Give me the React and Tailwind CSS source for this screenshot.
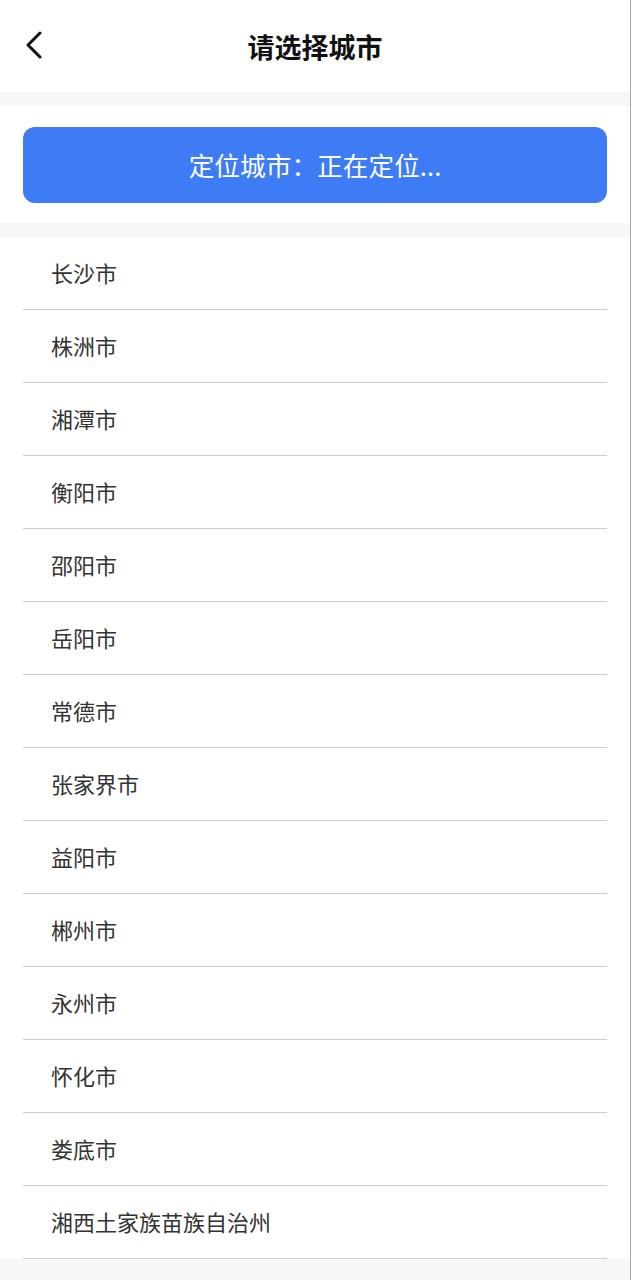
import React from "react";

const cities = [
  "长沙市",
  "株洲市",
  "湘潭市",
  "衡阳市",
  "邵阳市",
  "岳阳市",
  "常德市",
  "张家界市",
  "益阳市",
  "郴州市",
  "永州市",
  "怀化市",
  "娄底市",
  "湘西土家族苗族自治州",
];

export default function App() {
  return (
    <div
      className="w-[631px] min-h-[1280px] bg-[#f7f7f7] border-r border-[#a8a8a8]"
      style={{ fontFamily: '"Noto Sans CJK SC", "Noto Sans", sans-serif' }}
    >
      <header className="relative h-[92px] bg-white flex items-center justify-center">
        <button className="absolute left-[22px] top-[30px] w-[24px] h-[30px] flex items-center justify-center">
          <svg width="20" height="28" viewBox="0 0 20 28" fill="none">
            <path
              d="M16 2 L4 14 L16 26"
              stroke="#111"
              strokeWidth="3"
              strokeLinecap="round"
              strokeLinejoin="round"
            />
          </svg>
        </button>
        <h1 className="text-[27px] font-bold text-[#111] leading-none">请选择城市</h1>
      </header>
      <div className="h-[14px]" />
      <section className="bg-white h-[117px] px-[23px] pt-[21px]">
        <div className="h-[76px] rounded-[12px] bg-[#3d7cf5] flex items-center justify-center text-white text-[25.7px] leading-none">
          定位城市：正在定位...
        </div>
      </section>
      <div className="h-[14px]" />
      <ul className="bg-white px-[23px]">
        {cities.map((c) => (
          <li
            key={c}
            className="h-[73px] border-b border-[#cccccc] flex items-center pl-[28px] text-[22px] text-[#333] leading-none pb-[2px]"
          >
            {c}
          </li>
        ))}
      </ul>
    </div>
  );
}
